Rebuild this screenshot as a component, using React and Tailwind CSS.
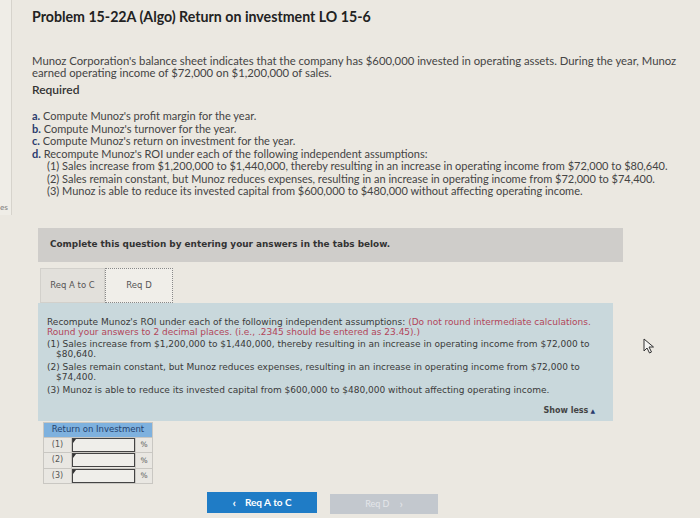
import React from 'react';

const assumptions = [
  '(1) Sales increase from $1,200,000 to $1,440,000, thereby resulting in an increase in operating income from $72,000 to $80,640.',
  '(2) Sales remain constant, but Munoz reduces expenses, resulting in an increase in operating income from $72,000 to $74,400.',
  '(3) Munoz is able to reduce its invested capital from $600,000 to $480,000 without affecting operating income.',
];

// panel copy, broken where the reference wraps
const panelItems = [
  ['(1) Sales increase from $1,200,000 to $1,440,000, thereby resulting in an increase in operating income from $72,000 to', '$80,640.'],
  ['(2) Sales remain constant, but Munoz reduces expenses, resulting in an increase in operating income from $72,000 to', '$74,400.'],
  ['(3) Munoz is able to reduce its invested capital from $600,000 to $480,000 without affecting operating income.'],
];

function Cursor() {
  return (
    <svg width="12" height="16" viewBox="0 0 12 16" className="absolute left-[643px] top-[338px]">
      <path d="M1 1 L1 13 L4 10 L6.5 15 L8.5 14 L6 9 L10.5 9 Z" fill="#f4f4f2" stroke="#333" strokeWidth="1" strokeLinejoin="round" />
    </svg>
  );
}

export default function App() {
  return (
    <div className="relative w-[700px] h-[518px] overflow-hidden bg-[#ebe8e1] flex text-[#333]">
      <div className="w-[12px] shrink-0 flex flex-col">
        <div className="h-[215px] border-r border-[#d6d3cc] bg-[#efede7] flex items-end pb-[3px]">
          <span className="text-[7px] text-[#777] font-['DejaVu_Sans',sans-serif] leading-none">es</span>
        </div>
      </div>

      <div className="flex-1 pl-[20px] pt-[7px] font-['Lato','Open_Sans',sans-serif]">
        <h1 className="text-[14.2px] font-bold leading-[19px] text-[#222]">
          Problem 15-22A (Algo) Return on investment LO 15-6
        </h1>

        <p className="mt-[29px] text-[11.3px] leading-[11.5px] text-[#444] w-[660px]">
          Munoz Corporation's balance sheet indicates that the company has $600,000 invested in operating assets. During the year, Munoz earned operating income of $72,000 on $1,200,000 of sales.
        </p>

        <div className="mt-[5px] text-[12px] font-semibold text-[#333] leading-[14px]">Required</div>

        <ul className="mt-[13px] text-[11px] leading-[12.5px] text-[#444]">
          <li><b className="text-[#2a3b6e]">a.</b> Compute Munoz's profit margin for the year.</li>
          <li><b className="text-[#2a3b6e]">b.</b> Compute Munoz's turnover for the year.</li>
          <li><b className="text-[#2a3b6e]">c.</b> Compute Munoz's return on investment for the year.</li>
          <li><b className="text-[#2a3b6e]">d.</b> Recompute Munoz's ROI under each of the following independent assumptions:</li>
          {assumptions.map((a) => (
            <li key={a} className="pl-[15px]">{a}</li>
          ))}
        </ul>

        <div className="font-['DejaVu_Sans','Verdana',sans-serif] ml-[6px] w-[585px]">
          <div className="mt-[30px] h-[34px] bg-[#cfcdca] flex items-center pl-[12px]">
            <span className="text-[8.9px] font-bold text-[#333]">Complete this question by entering your answers in the tabs below.</span>
          </div>

          <div className="mt-[6px] flex h-[35px] pl-[2px]">
            <div className="w-[65px] bg-[#e2e0db] border border-[#d2d0cb] flex items-center justify-center text-[8.5px] text-[#555]">Req A to C</div>
            <div className="w-[68px] bg-[#f0eee9] border border-dotted border-[#888] flex items-center justify-center text-[8.5px] text-[#555]">Req D</div>
          </div>

          <div className="w-[575px] h-[118px] bg-[#c9d8dc] pt-[14px] pl-[9px] pr-[10px] text-[9px] leading-[10.5px] text-[#3a3a3a] relative whitespace-nowrap">
            <p>Recompute Munoz's ROI under each of the following independent assumptions: <span className="text-[#b2465a]">(Do not round intermediate calculations.</span></p>
            <p className="text-[#b2465a]">Round your answers to 2 decimal places. (i.e., .2345 should be entered as 23.45).)</p>
            <div className="mt-[1px] flex flex-col gap-[2px]">
              {panelItems.map((lines) => (
                <div key={lines[0]}>
                  <p>{lines[0]}</p>
                  {lines[1] && <p className="pl-[9px]">{lines[1]}</p>}
                </div>
              ))}
            </div>
            <div className="absolute right-[18px] bottom-[4px] text-[8px] font-bold text-[#444] flex items-center gap-[2px]">
              Show less <span className="text-[6px] text-[#2a3b6e]">▲</span>
            </div>
          </div>

          <table className="mt-[1px] ml-[5px] border-collapse text-[8px] text-[#555]">
            <thead>
              <tr>
                <th colSpan={3} className="h-[15px] bg-[#7eb1de] border border-[#c9c7c2] text-[#24426f] font-normal text-[8.5px] w-[109px]">Return on Investment</th>
              </tr>
            </thead>
            <tbody>
              {['(1)', '(2)', '(3)'].map((r) => (
                <tr key={r} className="h-[15.5px]">
                  <td className="w-[28px] border border-[#c9c7c2] bg-[#e9e7e2] text-center">{r}</td>
                  <td className="w-[64px] border border-[#c9c7c2] p-0 bg-[#e9e7e2]">
                    <div className="relative h-[14px] border border-[#444] bg-[#efeeea]">
                      <span className="absolute left-0 top-0 w-0 h-0 border-t-[4px] border-r-[3px] border-t-[#333] border-r-transparent"></span>
                    </div>
                  </td>
                  <td className="w-[17px] border border-[#c9c7c2] bg-[#e9e7e2] text-center text-[7.5px]">%</td>
                </tr>
              ))}
            </tbody>
          </table>

          <div className="mt-[8px] flex gap-[13px] pl-[169px]">
            <div className="w-[110px] h-[21px] bg-[#1f7cc6] flex items-center justify-center gap-[9px] text-white text-[10px] font-bold font-['Lato',sans-serif]">
              <span className="text-[12px] leading-none">‹</span> Req A to C
            </div>
            <div className="w-[108px] h-[20px] mt-[2px] bg-[#c3c8ce] flex items-center justify-center gap-[10px] text-[#e3e6ea] text-[9px] font-['Lato',sans-serif]">
              Req D <span className="text-[12px] leading-none">›</span>
            </div>
          </div>
        </div>
      </div>

      <Cursor />
    </div>
  );
}
